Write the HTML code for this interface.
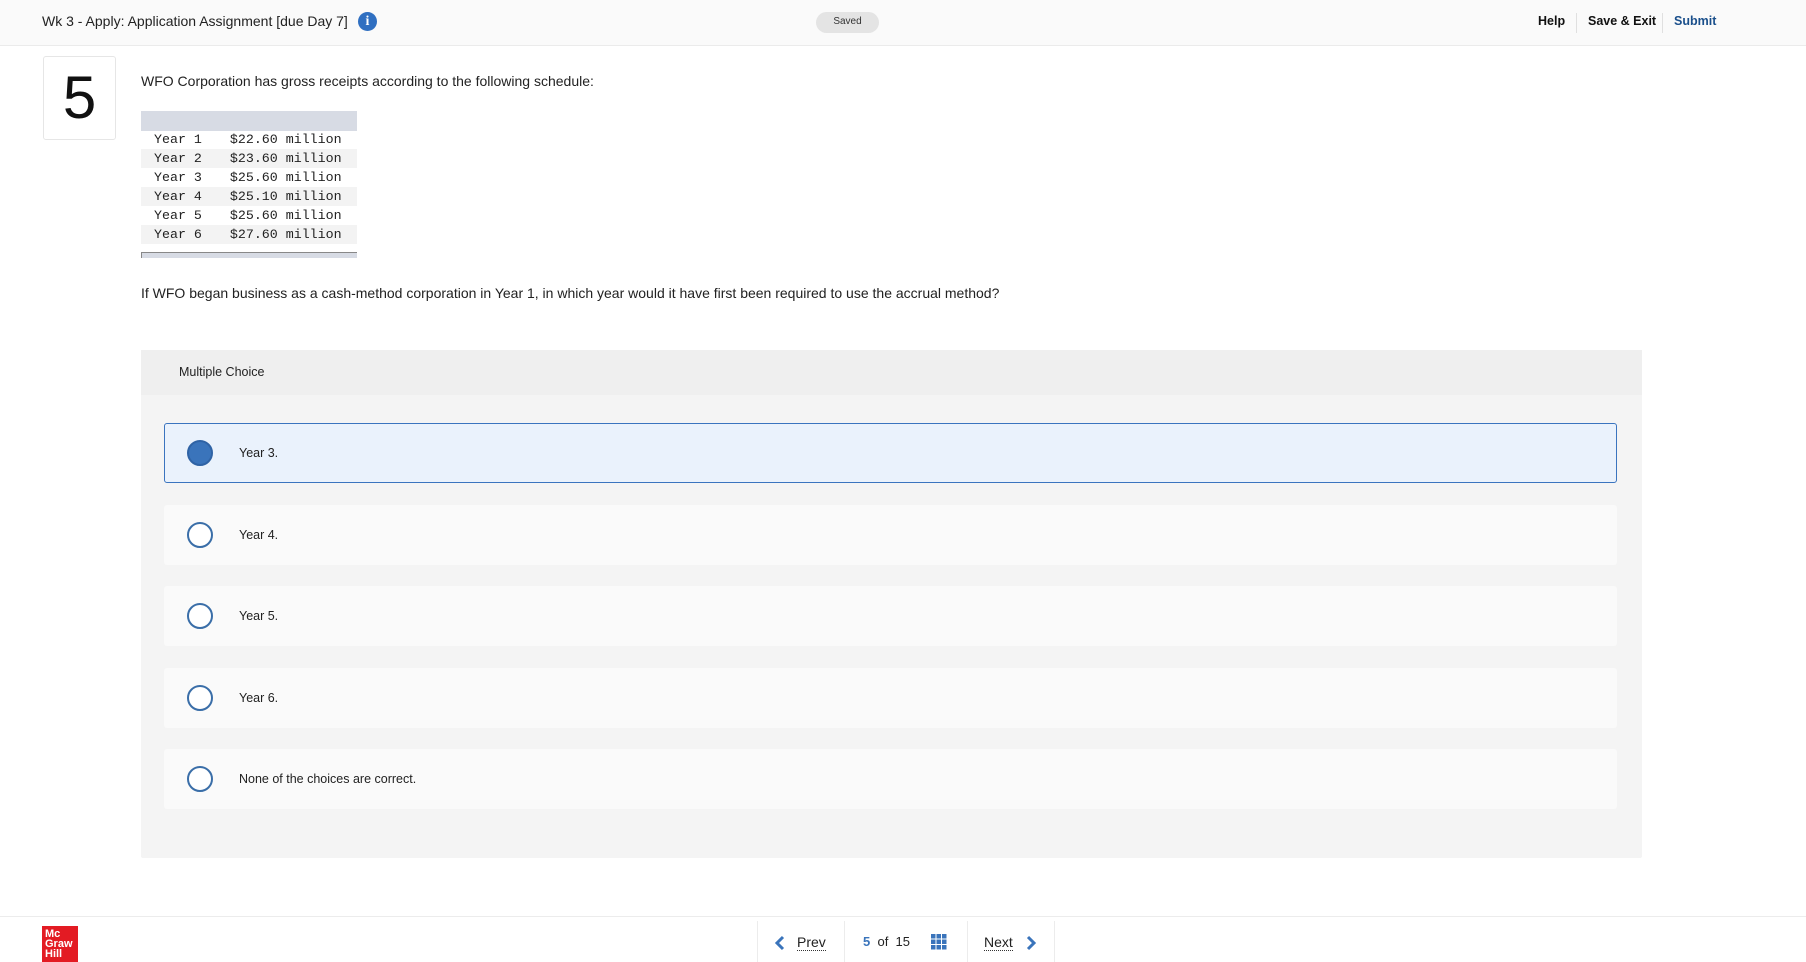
<!DOCTYPE html>
<html><head><meta charset="utf-8"><style>
*{margin:0;padding:0;box-sizing:border-box}
body{width:1806px;height:962px;background:#fff;font-family:"Liberation Sans",Arial,sans-serif;color:#222;position:relative;overflow:hidden}
.abs{position:absolute}
.hdr{left:0;top:0;width:1806px;height:46px;background:#fafafa;border-bottom:1px solid #ebebeb}
.opt{position:absolute;left:164px;width:1453px;height:60px;background:#fafafa;border-radius:3px}
.opt .r{position:absolute;left:23px;top:17px;width:26px;height:26px;border:2px solid #3a6ea8;border-radius:50%;background:#fff}
.opt .t{position:absolute;left:75px;top:0;line-height:60px;font-size:12.5px;color:#222}
.mono{font-family:"Liberation Mono",monospace;font-size:13.3px;color:#222}
.row{position:absolute;left:141px;width:216px;height:19px;line-height:19px}
</style></head><body>
<div class="abs hdr"></div>
<div class="abs" style="left:42px;top:13px;font-size:14px;color:#222">Wk 3 - Apply: Application Assignment [due Day 7]</div>
<div class="abs" style="left:358px;top:12px;width:19px;height:19px;border-radius:50%;background:#2f6fc1;color:#fff;font:bold 14px 'Liberation Serif',serif;text-align:center;line-height:19px">i</div>
<div class="abs" style="left:816px;top:12px;width:63px;height:21px;border-radius:11px;background:#e4e4e4;font-size:10px;text-align:center;line-height:20px;color:#333">Saved</div>
<div class="abs" style="left:1538px;top:14px;font-size:12.5px;font-weight:bold;color:#111">Help</div>
<div class="abs" style="left:1576px;top:13px;width:1px;height:20px;background:#e0e0e0"></div>
<div class="abs" style="left:1588px;top:14px;font-size:12.5px;font-weight:bold;color:#111">Save &amp; Exit</div>
<div class="abs" style="left:1662px;top:13px;width:1px;height:20px;background:#e0e0e0"></div>
<div class="abs" style="left:1674px;top:14px;font-size:12.5px;font-weight:bold;color:#1a4f8b">Submit</div>

<div class="abs" style="left:43px;top:56px;width:73px;height:84px;border:1px solid #e6e6e6;border-radius:3px;font-size:60px;text-align:center;line-height:82px;color:#111">5</div>
<div class="abs" style="left:141px;top:73px;font-size:14px;color:#222">WFO Corporation has gross receipts according to the following schedule:</div>
<div class="abs" style="left:141px;top:111px;width:216px;height:20px;background:#d7dbe4"></div>
<div class="row mono" style="top:130px"><span style="margin-left:13px">Year 1</span><span style="margin-left:28px">$22.60 million</span></div>
<div class="row mono" style="top:149px;background:#f3f3f3"><span style="margin-left:13px">Year 2</span><span style="margin-left:28px">$23.60 million</span></div>
<div class="row mono" style="top:168px"><span style="margin-left:13px">Year 3</span><span style="margin-left:28px">$25.60 million</span></div>
<div class="row mono" style="top:187px;background:#f3f3f3"><span style="margin-left:13px">Year 4</span><span style="margin-left:28px">$25.10 million</span></div>
<div class="row mono" style="top:206px"><span style="margin-left:13px">Year 5</span><span style="margin-left:28px">$25.60 million</span></div>
<div class="row mono" style="top:225px;background:#f3f3f3"><span style="margin-left:13px">Year 6</span><span style="margin-left:28px">$27.60 million</span></div>
<div class="abs" style="left:141px;top:252px;width:216px;height:6px;background:#d7dbe4;border-top:1px solid #888;border-left:1px solid #888"></div>
<div class="abs" style="left:141px;top:285px;font-size:14px;color:#222">If WFO began business as a cash-method corporation in Year 1, in which year would it have first been required to use the accrual method?</div>

<div class="abs" style="left:141px;top:350px;width:1501px;height:508px;background:#f4f4f4;border-radius:2px"></div>
<div class="abs" style="left:141px;top:350px;width:1501px;height:45px;background:#efefef"></div>
<div class="abs" style="left:179px;top:365px;font-size:12.5px;color:#222">Multiple Choice</div>

<div class="opt" style="top:423px;background:#eaf2fc;border:1px solid #3a74bf"><div class="r" style="left:22px;top:16px;background:#3a74bb;border-color:#2f63a5"></div><div class="t" style="left:74px;line-height:58px">Year 3.</div></div>
<div class="opt" style="top:505px"><div class="r"></div><div class="t">Year 4.</div></div>
<div class="opt" style="top:586px"><div class="r"></div><div class="t">Year 5.</div></div>
<div class="opt" style="top:668px"><div class="r"></div><div class="t">Year 6.</div></div>
<div class="opt" style="top:749px"><div class="r"></div><div class="t">None of the choices are correct.</div></div>

<div class="abs" style="left:0;top:916px;width:1806px;height:1px;background:#ececec"></div>
<div class="abs" style="left:42px;top:926px;width:36px;height:36px;background:#e31b23;color:#fff;font:bold 11px/10px 'Liberation Sans',sans-serif;padding:3px 0 0 3px">Mc<br>Graw<br>Hill</div>
<div class="abs" style="left:757px;top:921px;width:1px;height:41px;background:#ececec"></div>
<div class="abs" style="left:844px;top:921px;width:1px;height:41px;background:#ececec"></div>
<div class="abs" style="left:967px;top:921px;width:1px;height:41px;background:#ececec"></div>
<div class="abs" style="left:1054px;top:921px;width:1px;height:41px;background:#ececec"></div>
<svg class="abs" style="left:774px;top:935px" width="12" height="16"><path d="M9 2 L3 8 L9 14" fill="none" stroke="#3a74bb" stroke-width="3"/></svg>
<div class="abs" style="left:797px;top:935px;font-size:14px;color:#222;border-bottom:1px dotted #333;line-height:15px">Prev</div>
<div class="abs" style="left:863px;top:934px;font-size:13px;color:#222"><b style="color:#3a74bb">5</b>&nbsp; of &nbsp;15</div>
<svg class="abs" style="left:931px;top:934px" width="16" height="16"><g fill="#3a74bb"><rect x="0" y="0" width="4.5" height="4.5"/><rect x="5.5" y="0" width="4.5" height="4.5"/><rect x="11" y="0" width="4.5" height="4.5"/><rect x="0" y="5.5" width="4.5" height="4.5"/><rect x="5.5" y="5.5" width="4.5" height="4.5"/><rect x="11" y="5.5" width="4.5" height="4.5"/><rect x="0" y="11" width="4.5" height="4.5"/><rect x="5.5" y="11" width="4.5" height="4.5"/><rect x="11" y="11" width="4.5" height="4.5"/></g></svg>
<div class="abs" style="left:984px;top:935px;font-size:14px;color:#222;border-bottom:1px dotted #333;line-height:15px">Next</div>
<svg class="abs" style="left:1025px;top:935px" width="12" height="16"><path d="M3 2 L9 8 L3 14" fill="none" stroke="#3a74bb" stroke-width="3"/></svg>
</body></html>
